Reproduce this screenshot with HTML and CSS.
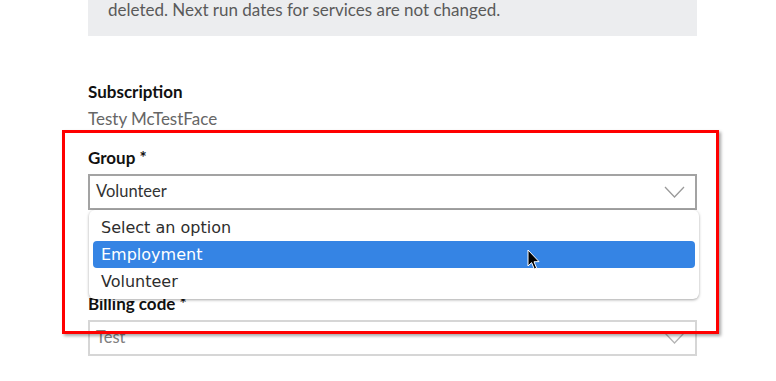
FILE: index.html
```html
<!DOCTYPE html>
<html>
<head>
<meta charset="utf-8">
<link rel="stylesheet" href="styles.css">
</head>
<body>
<div class="page">
  <div class="notice">deleted. Next run dates for services are not changed.</div>
  <div class="field field-static">
    <div class="label">Subscription</div>
    <div class="value">Testy McTestFace</div>
  </div>
  <div class="field field-group">
    <div class="label">Group *</div>
    <div class="select">
      <span>Volunteer</span>
      <svg class="chev" width="21" height="13" viewBox="0 0 21 13"><path d="M1 1 L10.5 11 L20 1" fill="none" stroke="#9a9a9a" stroke-width="1.3"/></svg>
    </div>
  </div>
  <div class="field field-billing">
    <div class="label">Billing code *</div>
    <div class="select select-disabled">
      <span>Test</span>
      <svg class="chev" width="21" height="13" viewBox="0 0 21 13"><path d="M1 1 L10.5 11 L20 1" fill="none" stroke="#b5b5b5" stroke-width="1.3"/></svg>
    </div>
  </div>
</div>
<div class="popup">
  <div class="opt">Select an option</div>
  <div class="opt opt-active">Employment</div>
  <div class="opt">Volunteer</div>
</div>
<div class="annot"></div>
<svg class="cursor" width="14" height="22" viewBox="0 0 14 22"><path d="M1 1 L1 17 L4.6 13.6 L7.3 20 L9.6 19 L7 12.8 L12 12.6 Z" fill="#000" stroke="#fff" stroke-width="1"/></svg>
</body>
</html>
```
FILE: styles.css
```css
html, body {
  margin: 0;
  padding: 0;
  background: #fff;
}
body {
  width: 776px;
  height: 381px;
  overflow: hidden;
  position: relative;
  font-family: Lato, "Open Sans", sans-serif;
  color: #222;
}
.page {
  margin-left: 88px;
  width: 609px;
  display: flex;
  flex-direction: column;
}
.notice {
  background: #ecedef;
  color: #5a5a5a;
  font-size: 17px;
  line-height: 20px;
  padding: 0 20px 16px 20px;
}
.field {
  display: flex;
  flex-direction: column;
}
.label {
  font-weight: 700;
  font-size: 17px;
  line-height: 24px;
  color: #111;
}
.value {
  font-size: 17px;
  line-height: 24px;
  color: #666;
  margin-top: 3px;
}
.field-static { margin-top: 44px; }
.field-group { margin-top: 15px; }
.field-group .label { margin-bottom: 4px; }
.field-billing { margin-top: 82px; }
.field-billing .label { margin-bottom: 4px; }
.select {
  height: 32px;
  border: 2px solid #a3a3a3;
  display: flex;
  align-items: center;
  justify-content: space-between;
  padding: 0 10px 0 6px;
  font-size: 16.5px;
  color: #333;
}
.select span { margin-top: -3px; }
.select-disabled {
  border-color: #d6d6d6;
  color: #808080;
}
.chev { display: block; }
.popup {
  position: absolute;
  left: 89px;
  top: 210px;
  width: 602px;
  padding: 4px;
  background: #fff;
  border-radius: 6px;
  box-shadow: 0 1px 3px rgba(0,0,0,0.35);
  font-family: "DejaVu Sans", sans-serif;
  font-size: 16px;
  color: #2e2e2e;
}
.opt {
  height: 27px;
  line-height: 27px;
  padding-left: 8px;
  border-radius: 4px;
}
.opt-active {
  background: #3584e4;
  color: #fff;
}
.annot {
  position: absolute;
  left: 62px;
  top: 130px;
  width: 651px;
  height: 198px;
  border: 3px solid #ff0000;
  box-shadow: 2px 2px 3px rgba(0,0,0,0.35);
}
.cursor {
  position: absolute;
  left: 527px;
  top: 249px;
}
```
